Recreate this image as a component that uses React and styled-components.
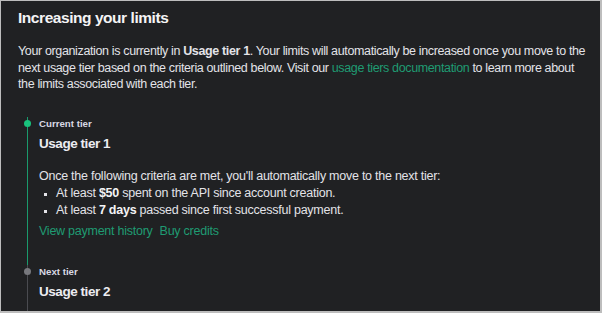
import React from 'react';
import styled, { createGlobalStyle } from 'styled-components';

const GlobalStyle = createGlobalStyle`
  html, body {
    margin: 0;
    padding: 0;
    background: #202123;
  }
  body {
    font-family: "Liberation Sans", Arial, sans-serif;
    -webkit-font-smoothing: antialiased;
  }
`;

const Frame = styled.div`
  box-sizing: border-box;
  width: 602px;
  height: 313px;
  overflow: hidden;
  background: #202123;
  border-style: solid;
  border-color: #bdbdbd;
  border-width: 1px 2px 2px 1px;
  padding: 6px 10px 0 17px;
  color: #ececf1;
`;

const Title = styled.h2`
  margin: 0;
  font-size: 15.5px;
  line-height: 22px;
  font-weight: 700;
  letter-spacing: -0.45px;
  color: #f4f4f5;
`;

const Intro = styled.p`
  margin: 14px 0 0;
  font-size: 12.5px;
  line-height: 16.5px;
  letter-spacing: -0.36px;
  white-space: nowrap;
  color: #e3e3e8;
`;

const Link = styled.a`
  color: #1f9b72;
  text-decoration: none;
  margin-right: ${({ $gap }) => $gap || 0}px;
`;

const Timeline = styled.div`
  margin-top: 24px;
  margin-left: 9px;
  display: flex;
  flex-direction: column;
`;

const Step = styled.div`
  position: relative;
  padding-left: 11px;
  padding-bottom: ${({ $last }) => ($last ? 20 : 25)}px;
  border-left: 1px solid ${({ $active }) => ($active ? '#1a9a6c' : '#4a4b50')};

  &::before {
    content: '';
    position: absolute;
    left: -4px;
    top: 3px;
    width: 7px;
    height: 7px;
    border-radius: 50%;
    background: ${({ $active }) => ($active ? '#19c37d' : '#77787d')};
  }
`;

const Label = styled.div`
  font-size: 9.7px;
  line-height: 13px;
  font-weight: 700;
  color: #d9d9e3;
`;

const TierName = styled.div`
  margin-top: 4px;
  font-size: 13.5px;
  line-height: 20px;
  font-weight: 700;
  letter-spacing: -0.45px;
  color: #ececf1;
`;

const Body = styled.div`
  margin-top: 14px;
  font-size: 12.5px;
  line-height: 17px;
  letter-spacing: -0.25px;
  color: #e3e3e8;
`;

const Criteria = styled.ul`
  margin: 0;
  padding-left: 17px;
  list-style: square;

  li {
    line-height: 17px;
  }
  li::marker {
    font-size: 9px;
  }
  b {
    font-weight: 700;
    color: #f4f4f5;
  }
`;

const Actions = styled.div`
  margin-top: 4px;
  line-height: 17px;
`;

export default function App() {
  return (
    <>
      <GlobalStyle />
      <Frame>
        <Title>Increasing your limits</Title>
        <Intro>
          Your organization is currently in <b>Usage tier 1</b>. Your limits will automatically be increased once you move to the
          <br />
          next usage tier based on the criteria outlined below. Visit our{' '}
          <Link href="#">usage tiers documentation</Link> to learn more about
          <br />
          the limits associated with each tier.
        </Intro>
        <Timeline>
          <Step $active>
            <Label>Current tier</Label>
            <TierName>Usage tier 1</TierName>
            <Body>
              Once the following criteria are met, you'll automatically move to the next tier:
              <Criteria>
                <li>At least <b>$50</b> spent on the API since account creation.</li>
                <li>At least <b>7 days</b> passed since first successful payment.</li>
              </Criteria>
              <Actions>
                <Link href="#" $gap={7}>View payment history</Link>
                <Link href="#">Buy credits</Link>
              </Actions>
            </Body>
          </Step>
          <Step $last>
            <Label>Next tier</Label>
            <TierName>Usage tier 2</TierName>
          </Step>
        </Timeline>
      </Frame>
    </>
  );
}
